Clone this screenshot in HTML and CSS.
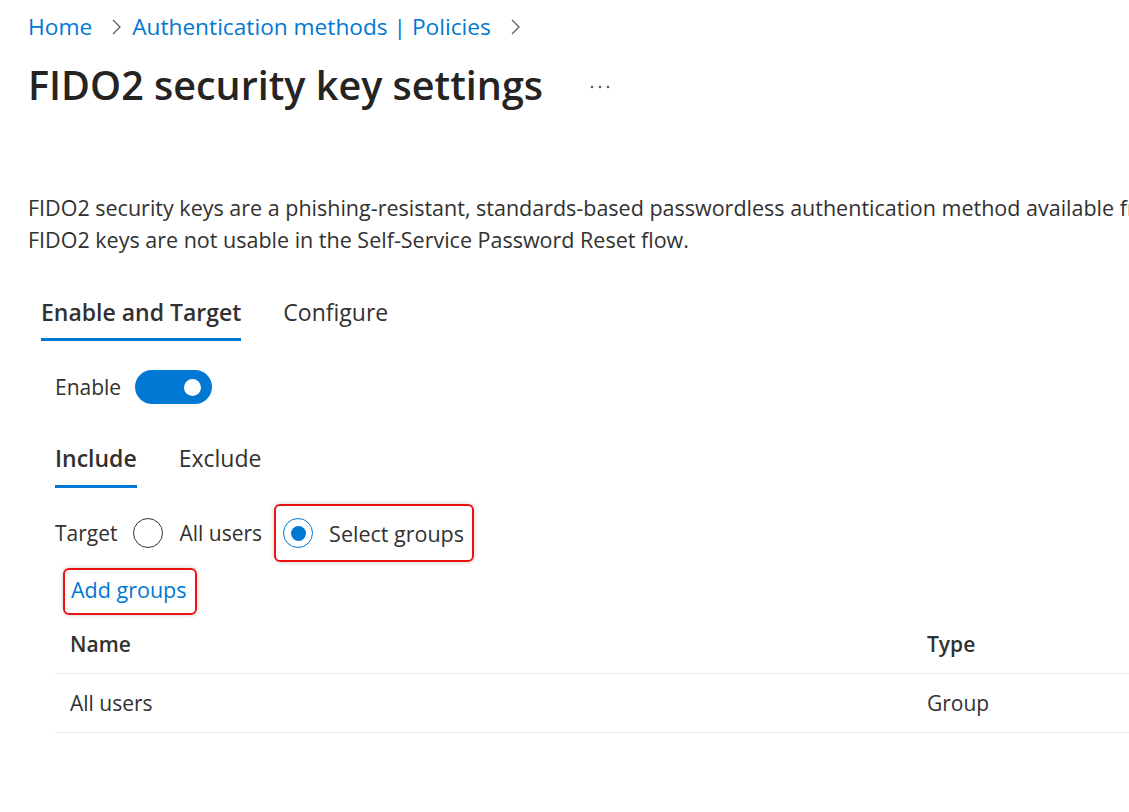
FILE: index.html
```html
<!DOCTYPE html>
<html lang="en">
<head>
    <meta charset="UTF-8">
    <meta name="viewport" content="width=device-width, initial-scale=1.0">
    <title>FIDO2 security key settings</title>
    <link rel="stylesheet" href="styles.css">
</head>
<body>
    <div class="page">
        <nav class="breadcrumb">
            <a href="#">Home</a>
            <svg class="chevron" width="9" height="16" viewBox="0 0 9 16"><polyline points="1,1 8,8 1,15" fill="none" stroke="#605e5c" stroke-width="1.3"/></svg>
            <a href="#">Authentication methods | Policies</a>
            <svg class="chevron" width="9" height="16" viewBox="0 0 9 16"><polyline points="1,1 8,8 1,15" fill="none" stroke="#605e5c" stroke-width="1.3"/></svg>
        </nav>
        <div class="title-row">
            <h1>FIDO2 security key settings</h1>
            <svg class="more" width="20" height="4" viewBox="0 0 20 4">
                <circle cx="2" cy="2" r="1.3" fill="#605e5c"/>
                <circle cx="10" cy="2" r="1.3" fill="#605e5c"/>
                <circle cx="18" cy="2" r="1.3" fill="#605e5c"/>
            </svg>
        </div>

        <p class="description">
            <span class="line">FIDO2 security keys are a phishing-resistant, standards-based passwordless authentication method available from a variety of vendors.</span>
            <span class="line">FIDO2 keys are not usable in the Self-Service Password Reset flow.</span>
        </p>

        <div class="tabs main-tabs">
            <div class="tab active">Enable and Target</div>
            <div class="tab">Configure</div>
        </div>

        <div class="panel">
            <div class="enable-row">
                <span>Enable</span>
                <div class="toggle on"><div class="knob"></div></div>
            </div>

            <div class="tabs sub-tabs">
                <div class="tab active">Include</div>
                <div class="tab">Exclude</div>
            </div>

            <div class="target-row">
                <span class="target-label">Target</span>
                <label class="radio">
                    <span class="circle"></span>
                    <span>All users</span>
                </label>
                <label class="radio checked highlight">
                    <span class="circle"><span class="dot"></span></span>
                    <span>Select groups</span>
                </label>
            </div>

            <div class="add-row">
                <a href="#" class="add-link highlight">Add groups</a>
            </div>

            <table class="groups">
                <thead>
                    <tr>
                        <th class="col-name">Name</th>
                        <th>Type</th>
                    </tr>
                </thead>
                <tbody>
                    <tr>
                        <td>All users</td>
                        <td>Group</td>
                    </tr>
                </tbody>
            </table>
        </div>
    </div>
</body>
</html>
```

FILE: styles.css
```css
html, body {
    margin: 0;
    background-color: #ffffff;
    overflow: hidden;
}
body {
    font-family: "Open Sans", "Noto Sans", sans-serif;
    color: #323130;
}
a {
    color: #0078d4;
    text-decoration: none;
}
.page {
    padding-left: 28px;
    width: 1400px;
}
.breadcrumb {
    display: flex;
    align-items: center;
    height: 52px;
    font-size: 22.7px;
}
.chevron {
    margin: 2px 11px 0 20px;
}
.title-row {
    display: flex;
    align-items: center;
    height: 66px;
}
h1 {
    margin: 0;
    font-size: 39.5px;
    font-weight: 600;
    color: #252423;
    line-height: 66px;
}
.more {
    margin: 4px 0 0 47px;
}
.description {
    margin: 74px 0 0 0;
    font-size: 21.5px;
    line-height: 32px;
}
.description .line {
    display: block;
    white-space: nowrap;
}
.tabs {
    display: flex;
    gap: 42px;
}
.tab {
    font-size: 23px;
    line-height: 32px;
    border-bottom: 3px solid transparent;
}
.tab.active {
    font-weight: 600;
    border-bottom-color: #0078d4;
}
.main-tabs {
    margin: 40px 0 0 13px;
}
.main-tabs .tab {
    padding-bottom: 10px;
}
.panel {
    padding-left: 27px;
}
.enable-row {
    display: flex;
    align-items: center;
    gap: 14px;
    font-size: 21px;
    margin-top: 28px;
    height: 36px;
}
.toggle {
    width: 77px;
    height: 34px;
    border-radius: 17px;
    background-color: #0078d4;
    position: relative;
}
.toggle .knob {
    position: absolute;
    top: 8.5px;
    right: 11.5px;
    width: 17px;
    height: 17px;
    border-radius: 50%;
    background-color: #ffffff;
}
.sub-tabs {
    margin-top: 37px;
}
.sub-tabs .tab {
    padding-bottom: 11px;
}
.target-row {
    display: flex;
    align-items: center;
    font-size: 21px;
    margin-top: 16px;
    height: 58px;
}
.target-label {
    margin-right: 15px;
}
.radio {
    display: flex;
    align-items: center;
    gap: 17px;
    height: 58px;
    box-sizing: border-box;
}
.circle {
    width: 30px;
    height: 30px;
    box-sizing: border-box;
    border: 1.5px solid #323130;
    border-radius: 50%;
    display: flex;
    align-items: center;
    justify-content: center;
}
.radio.checked .circle {
    border: 1px solid #0078d4;
}
.dot {
    width: 15px;
    height: 15px;
    border-radius: 50%;
    background-color: #0078d4;
}
.highlight {
    border: 2px solid #ee1111;
    border-radius: 6px;
    box-shadow: 0 0 5px rgba(0, 0, 0, 0.2);
}
.radio.highlight {
    margin-left: 12px;
    padding-left: 7px;
    gap: 16px;
    width: 200px;
    font-size: 21.5px;
}
.add-row {
    display: flex;
    margin: 6px 0 0 8px;
}
.add-link {
    display: block;
    box-sizing: border-box;
    white-space: nowrap;
    font-size: 21.5px;
    padding-left: 6px;
    height: 47px;
    line-height: 39px;
    width: 134px;
}
.groups {
    border-collapse: collapse;
    table-layout: fixed;
    width: 1100px;
    font-size: 21px;
}
.groups th, .groups td {
    text-align: left;
    padding: 0 15px;
    border-bottom: 1px solid #edebe9;
}
.groups th {
    font-weight: 600;
    height: 58px;
}
.groups td {
    height: 58px;
}
.col-name {
    width: 827px;
}
```
